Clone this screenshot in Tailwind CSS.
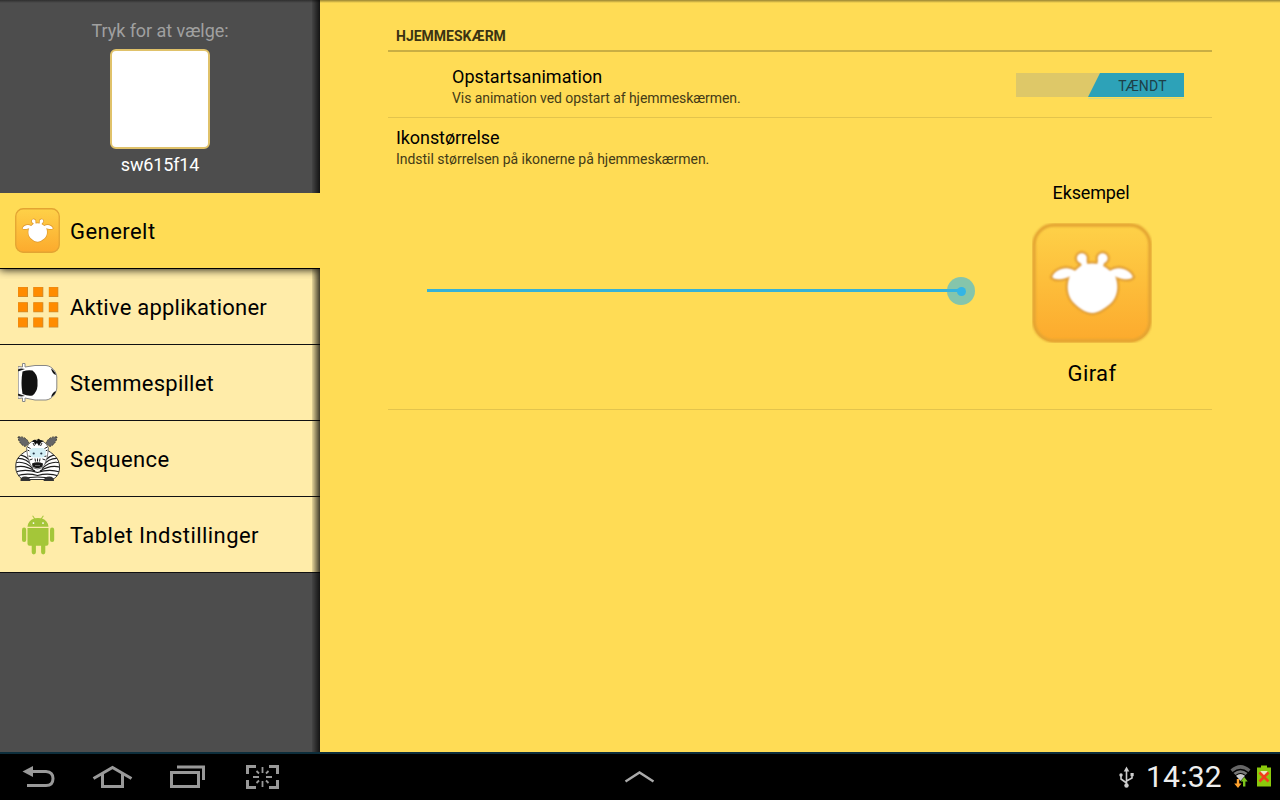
<!DOCTYPE html>
<html lang="da">
<head>
<meta charset="utf-8">
<title>Indstillinger</title>
<script src="https://cdn.jsdelivr.net/npm/@tailwindcss/browser@4"></script>
</head>
<body class="w-[1280px] h-[800px] overflow-hidden flex flex-col bg-black font-[Roboto,sans-serif] text-black">
<svg class="absolute w-0 h-0" aria-hidden="true">
  <defs>
    <linearGradient id="tile" x1="0" y1="0" x2="0" y2="1"><stop offset="0" stop-color="#fed148"/><stop offset="1" stop-color="#fcaa2d"/></linearGradient>
    <filter id="soft" x="-10%" y="-10%" width="120%" height="120%"><feGaussianBlur stdDeviation="0.9"/></filter>
    <symbol id="giraf" viewBox="0 0 120 120">
      <rect x="1.500" y="1.500" width="117" height="117" rx="20" fill="url(#tile)"/>
      <rect x="2" y="2" width="116" height="116" rx="20" fill="none" stroke="#e3a433" stroke-width="3.400" filter="url(#soft)"/>
      <path filter="url(#soft)" stroke="#dc962c" stroke-width="3.800" stroke-linejoin="round" fill="#fff" d="M50 42L48.500 40A5 5 0 1 1 54.500 37L55 41Q60 40 65.500 41L66 37A5 5 0 1 1 72 40L71 43Q75 45 78 48C87 42 98 47 101 54C98 58 87 56 83 53C87 62 86 74 78 81C72 86 65 90 60.500 90C55 90 48 86 43 81C35 74 34 62 38 53C34 56 23 58 20 54C23 47 34 42 43 48Q46 45 50 42Z"/>
      <path filter="url(#soft)" fill="#fff" d="M50 42L48.500 40A5 5 0 1 1 54.500 37L55 41Q60 40 65.500 41L66 37A5 5 0 1 1 72 40L71 43Q75 45 78 48C87 42 98 47 101 54C98 58 87 56 83 53C87 62 86 74 78 81C72 86 65 90 60.500 90C55 90 48 86 43 81C35 74 34 62 38 53C34 56 23 58 20 54C23 47 34 42 43 48Q46 45 50 42Z"/>
    </symbol>
  </defs>
</svg>

<main class="relative h-[752px] flex bg-[#ffdc55]">
  <aside class="relative w-[320px] h-full flex flex-col bg-[#4d4d4d]">
    <div class="h-[193px] flex flex-col items-center pt-[19px]">
      <p class="h-6 leading-6 text-[18px] tracking-[-0.05px] text-[#a0a0a0] whitespace-nowrap"><span>Tryk for at vælge:</span></p>
      <div class="mt-[6px] size-[100px] rounded-[6px] border-2 border-[#e0c26a] bg-white"></div>
      <p class="mt-[4px] h-6 leading-6 text-[18px] tracking-[-0.15px] text-white whitespace-nowrap"><span>sw615f14</span></p>
    </div>
    <nav class="flex flex-col text-[22px] tracking-[0.45px] leading-[73px] whitespace-nowrap">
      <div class="relative z-10 h-[76px] flex items-center gap-[10px] pl-[15px] bg-[#ffdc55] border-b border-black shadow-[0_1px_8px_rgba(0,0,0,0.85)] [clip-path:inset(0_0_-10px_0)]">
        <svg class="size-[45px]"><use href="#giraf"/></svg><span class="pt-[2px]">Generelt</span>
      </div>
      <div class="h-[76px] flex items-center gap-[10px] pl-[15px] bg-[#ffeca9] border-b border-[#111]">
        <svg class="size-[45px]" viewBox="0 0 45 45">
          <path fill="#c98a30" d="M3 2.900h10v10h-10zM18.300 2.900h10v10h-10zM33.800 2.900h9.500v10h-9.500zM3 18.200h10v10h-10zM18.300 18.200h10v10h-10zM33.800 18.200h9.500v10h-9.500zM3 33.500h10v10h-10zM18.300 33.500h10v10h-10zM33.800 33.500h9.500v10h-9.500z"/>
          <path fill="#ff8b00" d="M3.200 3.200h9v9h-9zM18.500 3.200h9v9h-9zM34 3.200h8.600v9h-8.600zM3.200 18.500h9v9h-9zM18.500 18.500h9v9h-9zM34 18.500h8.600v9h-8.600zM3.200 33.800h9v9h-9zM18.500 33.800h9v9h-9zM34 33.800h8.600v9h-8.600z"/>
        </svg><span class="pt-[2px] tracking-[0.22px]">Aktive applikationer</span>
      </div>
      <div class="h-[76px] flex items-center gap-[10px] pl-[15px] bg-[#ffeca9] border-b border-[#111]">
        <svg class="size-[45px]" viewBox="0 0 45 45">
          <path d="M3 6.500L7.500 7V3.500H10V7L20 5.500L31 5.500C37 6 41.500 12 41.800 17V28C41.500 33 37 39.500 31 40L20 40L10 38V41.500H7.500V38L3 38.500Z" fill="#fff" stroke="#888" stroke-width="1"/>
          <path d="M2.500 6V39" stroke="#ffeca9" stroke-width="1.200"/>
          <path d="M7.500 11.500Q13 9.500 17.500 10.500Q22 14 22.500 20V26Q22 32 17.500 35.500Q13 36.500 7.500 34Q5.500 23 7.500 11.500Z" fill="#111"/>
          <path d="M3 9.500Q5 8 10 9L3 11.500ZM3 35.500Q5 37 10 36L3 33.500Z" fill="#222"/>
          <path d="M3.500 12V33" stroke="#aaa" stroke-width=".8"/>
          <path d="M36 8.500Q40 11 41 15Q37.500 14 36 8.500ZM36 37Q40 35 41 31Q37.500 32 36 37Z" fill="#111"/>
        </svg><span class="pt-[2px] tracking-[0.25px]">Stemmespillet</span>
      </div>
      <div class="h-[76px] flex items-center gap-[10px] pl-[15px] bg-[#ffeca9] border-b border-[#111]">
        <svg class="size-[45px]" viewBox="0 0 45 45">
          <defs><clipPath id="zb"><path d="M13 14C2 20 0 25 1 34C2 38 5 43 9 43.500H36C41 43 44 38 44.500 33C45 25 42 20 32 14Z"/></clipPath></defs>
          <g clip-path="url(#zb)"><path fill="#fff" d="M0 12h45v33H0z"/>
            <g fill="none" stroke="#1c1c1c" stroke-width="1.150">
              <path d="M2 19Q10 18 17 27M-1 23Q9 20 18 30M-1 27Q9 24 18 32.500M-1 31.500Q9 28 20 35M43 19Q35 18 28 27M46 23Q36 20 27 30M46 27Q36 24 27 32.500M46 31.500Q36 28 25 35M0 36Q11 32.500 22.500 36.500Q34 32.500 45 36M1 40Q12 36.500 22.500 39.500Q33 36.500 44 40M7 43Q22 39 38 43"/>
            </g>
          </g>
          <path d="M13 14C2 20 0 25 1 34C2 38 5 43 9 43.500H36C41 43 44 38 44.500 33C45 25 42 20 32 14Z" fill="none" stroke="#333" stroke-width="1"/>
          <path d="M3 1Q11 0 14 7Q12 10 10 10.500Q4 8 3 1ZM42 1Q34 0 31 7Q33 10 35 10.500Q41 8 42 1Z" fill="#666" stroke="#333" stroke-width="1" stroke-dasharray="2 1"/>
          <path d="M11.500 12Q15 4 22.500 4Q30 4 33.500 12Q33 22 29.500 29Q27 33 22.500 33Q18 33 15.500 29Q12 22 11.500 12Z" fill="#fff" stroke="#444" stroke-width=".7"/>
          <path d="M12.500 11L15.500 12.500M12.500 14L14.500 15M32.500 11L29.500 12.500M32.500 14L30.500 15M13.500 20L16 20.500M14.500 24L17.500 23M31.500 20L29 20.500M30.500 24L27.500 23M18 7L19.500 10M27 7L25.500 10M22.500 22.500V25.500M20 22.500L20.500 25.500M25 22.500L24.500 25.500" stroke="#222" stroke-width="1"/>
          <path d="M17 6Q19 2 22 5Q23 1 25 4L29 5L26 6.500L24 10L22 7L20 9L19 6Z" fill="#111"/>
          <rect x="14.500" y="12" width="16.500" height="9.500" rx="4.500" fill="#d3eff5"/>
          <circle cx="18.700" cy="17.500" r="1.100" fill="#234"/><circle cx="26.300" cy="17.500" r="1.100" fill="#234"/>
          <path d="M17 27.500Q22.500 25 28 27.500L27.500 30.500Q22.500 34 17.500 30.500Z" fill="#191919"/>
          <path d="M20 29.500H25" stroke="#888" stroke-width=".7"/>
          <path d="M5.500 45Q5 40.500 10 40.500Q15 40.500 15.500 45ZM28.500 45Q29 40.500 34.500 40.500Q39 40.500 39 45Z" fill="#333"/>
        </svg><span class="pt-[2px] tracking-[0.4px]">Sequence</span>
      </div>
      <div class="h-[76px] flex items-center gap-[10px] pl-[15px] bg-[#ffeca9] border-b border-[#111]">
        <svg class="size-[45px]" viewBox="0 -0.8 45 45">
          <g fill="#a4c639"><path d="M12.500 14Q13 8 19 5.800L17.200 3.200L18 2.700L19.900 5.500Q23 4.700 26 5.500L28 2.700L28.800 3.200L27 5.800Q33 8 33.500 14Z"/>
          <path d="M12.500 15.200H33.500V31Q33.500 33 31.500 33H30.300V39.500A2.100 2.100 0 0 1 26.100 39.500V33H20.900V39.500A2.100 2.100 0 0 1 16.700 39.500V33H14.500Q12.500 33 12.500 31Z"/>
          <rect x="7" y="14.800" width="4.200" height="14.500" rx="2.100"/><rect x="35" y="14.800" width="4.200" height="14.500" rx="2.100"/></g>
          <circle cx="18.500" cy="10.300" r=".9" fill="#fff"/><circle cx="28" cy="10.300" r=".9" fill="#fff"/>
        </svg><span class="pt-[2px] tracking-[0.45px]">Tablet Indstillinger</span>
      </div>
    </nav>
    <div class="absolute top-0 right-0 w-2 h-[193px] bg-linear-to-r from-black/10 to-black/75"></div>
    <div class="absolute top-[269px] bottom-0 right-0 w-2 bg-linear-to-r from-black/10 to-black/75"></div>
  </aside>

  <section class="flex-1 pl-[68px] pr-[68px] pt-[22px] whitespace-nowrap">
    <h2 class="h-[30px] pl-2 border-b-2 border-[#c9ae43] text-[14px] leading-[28px] font-bold text-[#3b3313]"><span>HJEMMESKÆRM</span></h2>
    <div class="h-[66px] flex items-center justify-between pl-16 pr-7 border-b border-[#e3c44c]">
      <div class="pt-[4px]">
        <p class="text-[18px] leading-[22px] tracking-[0.05px]"><span>Opstartsanimation</span></p>
        <p class="text-[14px] leading-[20px] tracking-[-0.06px] text-[#443b17]"><span>Vis animation ved opstart af hjemmeskærmen.</span></p>
      </div>
      <div class="relative w-[168px] h-6 mt-[1px] bg-[#dec868]">
        <div class="absolute right-0 -bottom-[2px] w-24 h-px bg-[#d5d880]"></div>
        <div class="absolute right-0 top-0 w-24 h-6 pl-[13px] bg-[#2da2b8] [clip-path:polygon(12px_0,100%_0,100%_100%,0_100%)] text-center text-[14px] leading-[26px] tracking-[0.2px] text-[#1d4048]"><span>TÆNDT</span></div>
      </div>
    </div>
    <div class="h-[292px] pt-[9px] border-b border-[#e3c44c]">
      <div class="pl-2">
        <p class="text-[18px] leading-[22px] tracking-[-0.08px]"><span>Ikonstørrelse</span></p>
        <p class="text-[14px] leading-[20px] tracking-[-0.03px] text-[#443b17]"><span>Indstil størrelsen på ikonerne på hjemmeskærmen.</span></p>
      </div>
      <div class="flex pl-[39px] mt-[12px]">
        <div class="w-[549px] pt-[96px]">
          <div class="relative h-7">
            <div class="w-[534px] pt-[12px]"><div class="h-[3px] bg-[#36b2d6]"></div></div>
            <div class="absolute left-[520px] top-0 size-7 rounded-full bg-[#33b5e5]/60 flex items-center justify-center"><div class="size-[9px] rounded-full bg-[#33b5e5]"></div></div>
          </div>
        </div>
        <div class="ml-[56px] w-[120px] flex flex-col items-center">
          <p class="-ml-[2px] text-[18px] leading-6 tracking-[-0.15px]"><span>Eksempel</span></p>
          <svg class="mt-[18px] size-[120px]"><use href="#giraf"/></svg>
          <p class="mt-[16px] text-[22px] leading-[30px] tracking-[0.4px]"><span>Giraf</span></p>
        </div>
      </div>
    </div>
  </section>
  <div class="absolute inset-x-0 top-0 h-[3px] bg-linear-to-b from-black/40 to-transparent"></div>
</main>

<footer class="h-12 flex items-center border-t-2 border-[#0d2e3c] bg-black">
  <svg class="w-[330px] h-[46px]" viewBox="0 754 330 46" fill="none" stroke="#999" stroke-width="3">
    <path d="M31 771.500H46Q53 772 53 778.500Q53 785.500 46 785.500H27"/><path d="M22.500 771.500L33 766V777Z" fill="#999" stroke="none"/>
    <path d="M93.500 778.500L112.500 767.500L131.500 778.500"/><path d="M102.500 774V786.500H122.500V774"/>
    <rect x="171.500" y="772.500" width="27" height="14"/><path d="M177 767H203.500V780"/>
    <path d="M256 766.500H247.500V774M269 766.500H277.500V774M256 787.500H247.500V780M269 787.500H277.500V780"/>
    <path d="M262.500 767V773M262.500 781V787M253 777H259M266 777H272M256.500 771L259 773.500M268.500 771L266 773.500M256.500 783L259 780.500M268.500 783L266 780.500" stroke-width="1.800"/>
  </svg>
  <svg class="ml-[290px] w-[40px] h-[46px]" viewBox="620 754 40 46" fill="none" stroke="#aaa" stroke-width="2.400"><path d="M625.500 781.500L639.500 772.500L653.500 781.500"/></svg>
  <div class="flex-1"></div>
  <svg class="w-[20px] h-[46px]" viewBox="1117 754 20 46" fill="none" stroke="#ccc" stroke-width="1.600">
    <path d="M1126.500 769V785M1121 776V779L1126.500 783M1132 775V778L1126.500 781"/><path d="M1123.700 771.500L1126.500 766.500L1129.300 771.500Z" fill="#ccc" stroke="none"/><circle cx="1126.500" cy="785.500" r="2.200" fill="#ccc" stroke="none"/><circle cx="1121" cy="775" r="1.700" fill="#ccc" stroke="none"/><path d="M1130.500 773h3.200v3.200h-3.200z" fill="#ccc" stroke="none"/>
  </svg>
  <span class="ml-[9px] w-[84px] text-[30px] leading-[46px] tracking-[0.25px] text-[#eee] whitespace-nowrap"><span>14:32</span></span>
  <svg class="w-[50px] h-[46px]" viewBox="1230 754 50 46" fill="none">
    <path d="M1230.500 769.500Q1240.500 760.500 1250.500 769.500L1248.500 772Q1240.500 765.500 1232.500 772Z" fill="#666"/>
    <path d="M1233.500 773Q1240.500 767.500 1247.500 773L1245.500 775Q1240.500 771 1235.500 775Z" fill="#777"/>
    <path d="M1236 775.800Q1240.500 772 1245 775.800L1240.500 781Z" fill="#ccc"/>
    <path d="M1236.800 779h2.400v4.500h2.300L1238 788L1234.200 783.500h2.600Z" fill="#ffa22d"/>
    <path d="M1243 786.500h2.400v-5h2.300L1244.200 777L1240.700 781.500h2.300Z" fill="#7cc51c"/>
    <path d="M1261 765.500h6v2h4v19h-14v-19h4z" fill="#8bc90c"/>
    <path d="M1260.500 771h7v4h-7z" fill="#e9edc0"/>
    <path d="M1259.500 772.500L1268.500 781.500M1268.500 772.500L1259.500 781.500" stroke="#f1401c" stroke-width="2.600"/>
  </svg>
</footer>
</body>
</html>
